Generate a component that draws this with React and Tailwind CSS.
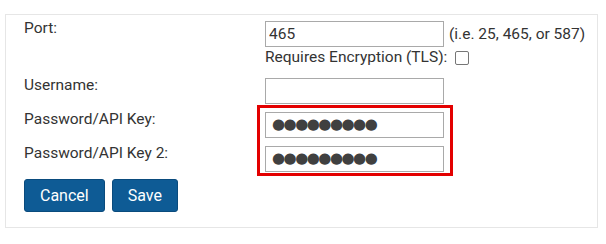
function Field({ label, children, className = '' }) {
  return (
    <div className={`flex items-start ${className}`}>
      <div className="w-[241px] shrink-0 leading-[20px]">{label}</div>
      <div className="pt-[3px]">{children}</div>
    </div>
  )
}

function TextBox({ value = '', dots = false }) {
  return (
    <input
      type="text"
      readOnly
      value={value}
      className={`block h-[26px] w-[179px] border border-[#a9a9a9] bg-white pl-[3px] text-[#333] outline-none ${
        dots ? "pb-[3px] pl-[6px] font-['DejaVu_Sans',sans-serif] text-[15px] tracking-[-1.5px] text-[#404040]" : 'text-[15.5px]'
      }`}
    />
  )
}

export default function App() {
  return (
    <div className="min-h-screen bg-white pl-[5px] pt-[14px] font-['Roboto',sans-serif] text-[15.5px] text-[#333]">
      <div className="w-[593px] border border-[#e6e6e6] pb-[15px] pl-[18px] pt-[3px]">
        <Field label="Port:">
          <div className="flex items-center">
            <TextBox value="465" />
            <span className="ml-[5px] leading-[20px]">(i.e. 25, 465, or 587)</span>
          </div>
          <div className="mt-[1px] flex items-center leading-[19px]">
            <span>Requires Encryption (TLS):</span>
            <input
              type="checkbox"
              className="ml-[8px] h-[14px] w-[14px] appearance-none rounded-[2px] border border-[#767676] bg-white"
            />
          </div>
        </Field>

        <Field label="Username:" className="mt-[8px]">
          <TextBox />
        </Field>

        <div className="relative mt-[5px]">
          <Field label="Password/API Key:">
            <TextBox value="●●●●●●●●●" dots />
          </Field>
          <Field label="Password/API Key 2:" className="mt-[5px]">
            <TextBox value="●●●●●●●●●" dots />
          </Field>
          <span className="pointer-events-none absolute left-[233px] top-[-4px] h-[71px] w-[196px] border-[3px] border-[#e30000]" />
        </div>

        <div className="mt-[7px] flex gap-[7px]">
          <button className="h-[33px] rounded-[3px] border border-[#0a4b7d] bg-[#0e5b95] px-[15px] text-[16px] text-white">
            Cancel
          </button>
          <button className="h-[33px] rounded-[3px] border border-[#0a4b7d] bg-[#0e5b95] px-[15px] text-[16px] text-white">
            Save
          </button>
        </div>
      </div>
    </div>
  )
}
